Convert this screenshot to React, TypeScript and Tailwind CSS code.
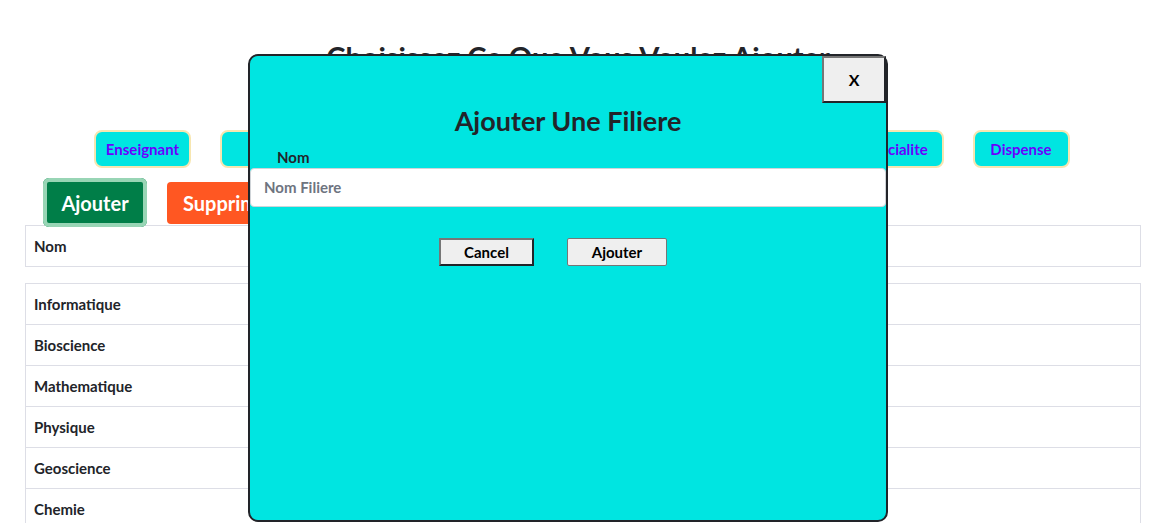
import React from "react";

const navItems = ["Enseignant", "Filiere", "Module", "Salle", "Groupe", "Semestre", "Specialite", "Dispense"];
const filieres = ["Informatique", "Bioscience", "Mathematique", "Physique", "Geoscience", "Chemie"];

function Modal() {
  return (
    <div className="absolute left-[248px] top-[54px] w-[640px] h-[468px] bg-[#00e5e1] border-2 border-[#222429] rounded-[10px]">
      <button className="absolute top-0 right-0 w-[64px] h-[47px] bg-[#efefef] border-2 border-t-[#767676] border-l-[#767676] border-r-[#222429] border-b-[#222429] text-[16px] font-bold text-black">
        X
      </button>
      <h2 className="pt-[49px] text-center text-[27px] font-bold leading-[32px] text-[#222429]">Ajouter Une Filiere</h2>
      <label className="block pl-[27px] pt-[12px] text-[15px] font-bold leading-[17px] text-[#222429]">Nom</label>
      <div className="mt-[2px] h-[39px] bg-white border border-[#cfd4d8] rounded-[4px] flex items-center pl-[13px] text-[15px] font-bold text-[#6e7480]">
        Nom Filiere
      </div>
      <div className="flex pl-[189px] gap-[33px] mt-[31px]">
        <button className="w-[95px] h-[28px] bg-[#efefef] border-2 border-t-[#767676] border-l-[#767676] border-r-[#222429] border-b-[#222429] text-[15px] font-bold text-black">
          Cancel
        </button>
        <button className="w-[100px] h-[28px] bg-[#efefef] border border-[#767676] rounded-[2px] text-[15px] font-bold text-black">
          Ajouter
        </button>
      </div>
    </div>
  );
}

export default function App() {
  return (
    <div className="relative w-[1156px] h-[523px] overflow-hidden bg-white font-['Lato','Liberation_Sans',sans-serif] text-[#222429]">
      <h1 className="pt-[35px] text-center text-[29px] font-bold leading-[44px]">Choisissez Ce Que Vous Voulez Ajouter</h1>

      <div className="flex pl-[94px] gap-[28.5px] mt-[51px]">
        {navItems.map((item) => (
          <button
            key={item}
            className="w-[97px] h-[38px] bg-[#00e5e1] border-2 border-[#f7e6b0] rounded-[8px] text-[15px] font-bold text-[#6a00ff]"
          >
            {item}
          </button>
        ))}
      </div>

      <div className="flex items-center pl-[43px] gap-[20px] mt-[10px]">
        <button className="w-[104px] h-[49px] bg-[#007e48] rounded-[6px] ring-4 ring-inset ring-[#98d5b5] text-[20px] font-bold text-white">
          Ajouter
        </button>
        <button className="h-[42px] px-[16px] bg-[#ff5722] rounded-[4px] text-[20px] font-bold text-white">
          Supprimer
        </button>
      </div>

      <div className="ml-[25px] mr-[15px] mt-[-2px] h-[42px] border border-[#dddee6] flex items-center pl-[8px] text-[15px] font-bold">
        Nom
      </div>

      <div className="ml-[25px] mr-[15px] mt-[16px] border-l border-r border-t border-[#dddee6]">
        {filieres.map((f) => (
          <div key={f} className="h-[41px] border-b border-[#dddee6] flex items-center pl-[8px] text-[15px] font-bold">
            {f}
          </div>
        ))}
      </div>

      <Modal />
    </div>
  );
}
